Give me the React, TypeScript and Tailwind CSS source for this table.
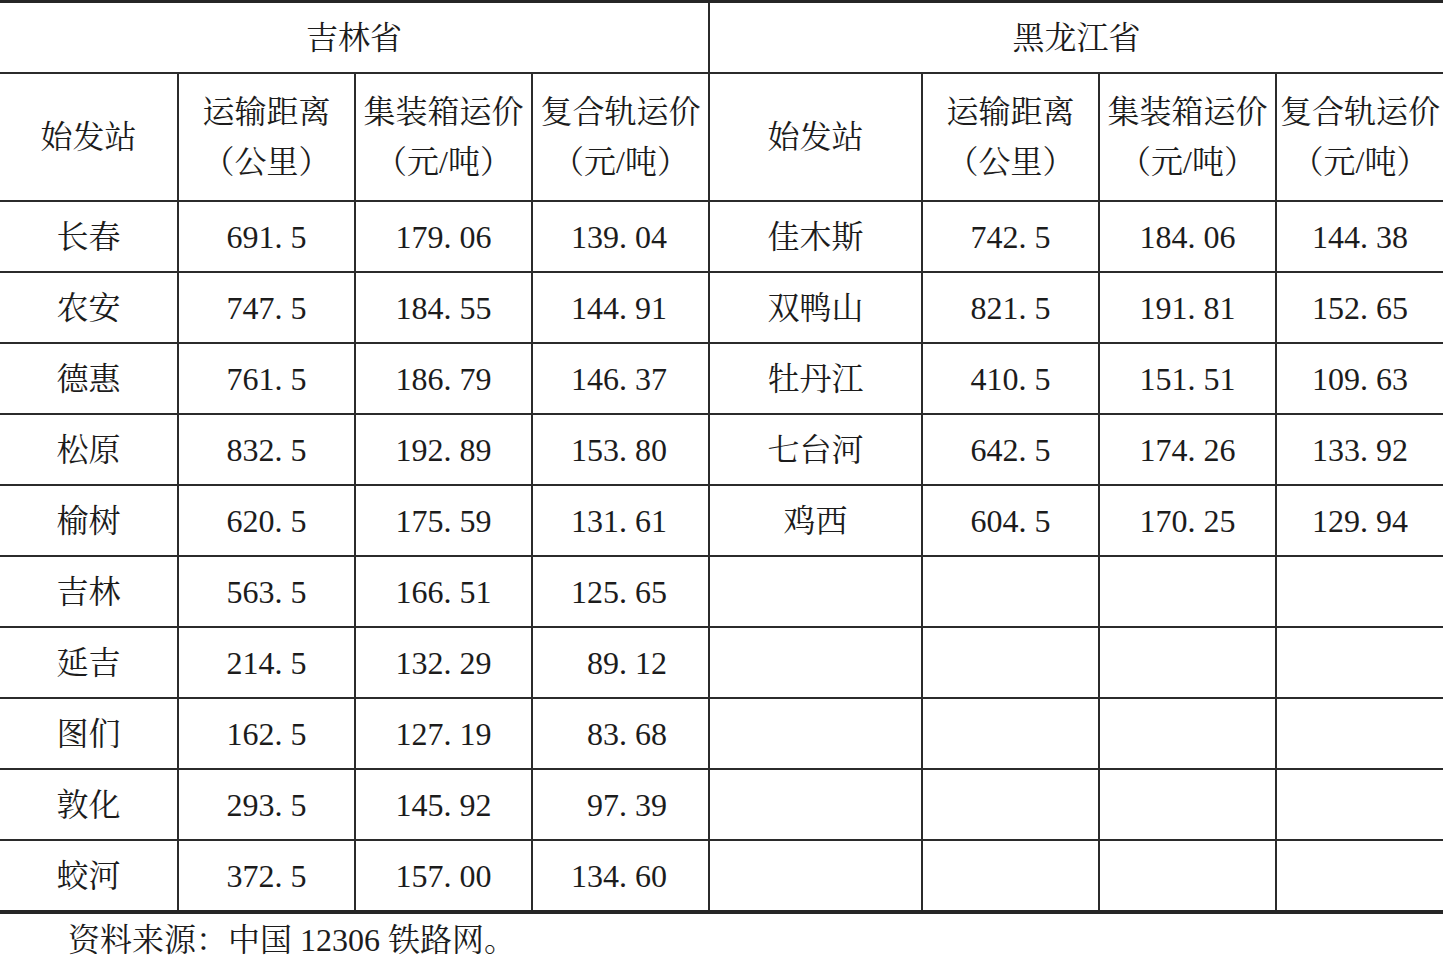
import React from 'react';

type Row = [string, string, string, string, string, string, string, string];

const rows: Row[] = [
  ['长春', '691. 5', '179. 06', '139. 04', '佳木斯', '742. 5', '184. 06', '144. 38'],
  ['农安', '747. 5', '184. 55', '144. 91', '双鸭山', '821. 5', '191. 81', '152. 65'],
  ['德惠', '761. 5', '186. 79', '146. 37', '牡丹江', '410. 5', '151. 51', '109. 63'],
  ['松原', '832. 5', '192. 89', '153. 80', '七台河', '642. 5', '174. 26', '133. 92'],
  ['榆树', '620. 5', '175. 59', '131. 61', '鸡西', '604. 5', '170. 25', '129. 94'],
  ['吉林', '563. 5', '166. 51', '125. 65', '', '', '', ''],
  ['延吉', '214. 5', '132. 29', '89. 12', '', '', '', ''],
  ['图们', '162. 5', '127. 19', '83. 68', '', '', '', ''],
  ['敦化', '293. 5', '145. 92', '97. 39', '', '', '', ''],
  ['蛟河', '372. 5', '157. 00', '134. 60', '', '', '', ''],
];

const font = "font-['Liberation_Serif','Noto_Serif_CJK_SC','Noto_Sans_CJK_SC',serif]";

function HeadCell({ top, bottom, last }: { top: string; bottom?: string; last?: boolean }) {
  return (
    <div
      className={
        'flex flex-col items-center justify-center whitespace-nowrap border-b-2 border-[#2b2b2b] leading-[50px] ' +
        (last ? '' : 'border-r-2')
      }
    >
      <span>{top}</span>
      {bottom && <span>{bottom}</span>}
    </div>
  );
}

export default function App() {
  return (
    <div className={`w-[1443px] bg-white text-[32px] text-[#1c1c1c] ${font}`}>
      <div className="grid grid-cols-[179px_177px_177px_177px_213px_177px_177px_166px] grid-rows-[71px_128px_repeat(9,71px)_69px] border-t-[3px] border-b-4 border-[#262626]">
        <div className="col-span-4 flex items-center justify-center border-b-2 border-r-2 border-[#2b2b2b]">吉林省</div>
        <div className="col-span-4 flex items-center justify-center border-b-2 border-[#2b2b2b]">黑龙江省</div>

        <HeadCell top="始发站" />
        <HeadCell top="运输距离" bottom="（公里）" />
        <HeadCell top="集装箱运价" bottom="（元/吨）" />
        <HeadCell top="复合轨运价" bottom="（元/吨）" />
        <HeadCell top="始发站" />
        <HeadCell top="运输距离" bottom="（公里）" />
        <HeadCell top="集装箱运价" bottom="（元/吨）" />
        <HeadCell top="复合轨运价" bottom="（元/吨）" last />

        {rows.map((r, i) =>
          r.map((v, j) => {
            const lastRow = i === rows.length - 1;
            return (
              <div
                key={`${i}-${j}`}
                className={
                  'flex items-center whitespace-nowrap border-[#2b2b2b] ' +
                  (lastRow ? '' : 'border-b-2 ') +
                  (j === 7 ? '' : 'border-r-2 ') +
                  (j === 3 ? 'justify-end pr-[41px]' : 'justify-center')
                }
              >
                {v}
              </div>
            );
          }),
        )}
      </div>
      <div className="flex h-[52px] items-center pl-[68px]">
        资料来源<span className="inline-block w-[1em]">：</span>中国 12306 铁路网。
      </div>
    </div>
  );
}
